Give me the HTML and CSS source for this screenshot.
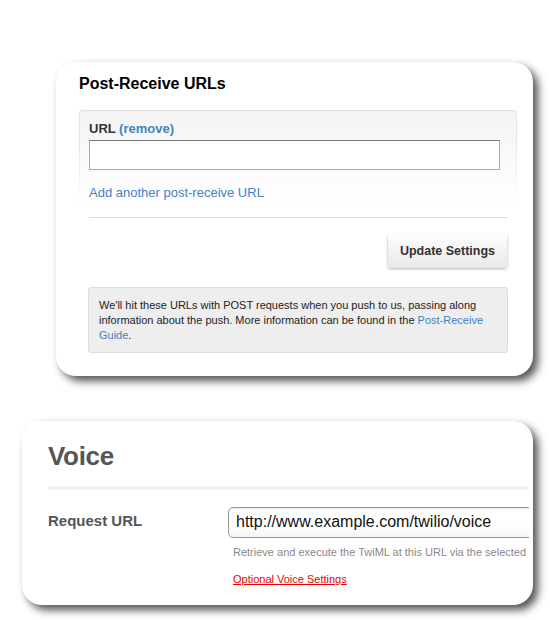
FILE: index.html
```html
<!DOCTYPE html>
<html>
<head>
<meta charset="utf-8">
<link rel="stylesheet" href="styles.css">
</head>
<body>
<div class="page">
  <div class="card card-gh">
    <h2 class="gh-title">Post-Receive URLs</h2>
    <div class="url-box">
      <div class="url-label">URL <a class="link">(remove)</a></div>
      <div class="url-input"></div>
      <a class="link add-link">Add another post-receive URL</a>
    </div>
    <div class="gh-rule"></div>
    <div class="btn-row"><div class="btn">Update Settings</div></div>
    <div class="info">We'll hit these URLs with POST requests when you push to us, passing along information about the push. More information can be found in the <a class="link">Post-Receive</a> <a class="link">Guide</a>.</div>
  </div>

  <div class="card card-tw">
    <div class="tw-clip">
      <h2 class="tw-title">Voice</h2>
      <div class="tw-rule"></div>
      <div class="tw-row">
        <div class="tw-label">Request URL</div>
        <div class="tw-field">
          <div class="tw-input">http://www.example.com/twilio/voice</div>
          <div class="tw-hint">Retrieve and execute the TwiML at this URL via the selected</div>
          <a class="tw-opt">Optional Voice Settings</a>
        </div>
      </div>
    </div>
  </div>
</div>
</body>
</html>
```

FILE: styles.css
```css
html, body {
  margin: 0;
  padding: 0;
  background: #fff;
}
body {
  font-family: "Liberation Sans", Arial, sans-serif;
  width: 550px;
  height: 620px;
  overflow: hidden;
}
.page {
  display: flex;
  flex-direction: column;
}
.card {
  background: #fff;
  border-radius: 20px;
  box-shadow: 5px 5px 8px rgba(0, 0, 0, 0.68);
  box-sizing: border-box;
}
.card-gh {
  margin: 62px 0 0 56px;
  width: 477px;
  height: 314px;
  padding: 13px 16px 0 23px;
}
.gh-title {
  margin: 0;
  font-size: 16px;
  font-weight: bold;
  color: #000;
  line-height: 18px;
}
.url-box {
  margin-top: 17px;
  border: 1px solid transparent;
  border-bottom: none;
  border-radius: 4px 4px 0 0;
  background: linear-gradient(#f4f4f4, #fff 95px) padding-box,
              linear-gradient(#e2e2e2, #e8e8e8 40%, #fff) border-box;
  padding: 10px 16px 14px 9px;
  height: 96px;
  box-sizing: border-box;
}
.url-label {
  font-size: 13px;
  font-weight: bold;
  color: #333;
  line-height: 16px;
}
.link {
  color: #4183c4;
  text-decoration: none;
}
.url-input {
  margin-top: 3px;
  height: 28px;
  background: #fff;
  border: 1px solid #aaa;
  border-top-color: #777;
}
.add-link {
  display: block;
  margin-top: 15px;
  font-size: 13px;
  line-height: 16px;
}
.gh-rule {
  margin: 11px 9px 0 10px;
  border-top: 1px solid #ddd;
}
.btn-row {
  display: flex;
  justify-content: flex-end;
  margin: 16px 10px 0 0;
}
.btn {
  width: 119px;
  height: 34px;
  box-sizing: border-box;
  border-radius: 3px;
  background: linear-gradient(#fdfdfd, #e8e8e8);
  box-shadow: 0 1px 3px rgba(0, 0, 0, 0.3);
  font-size: 12.5px;
  font-weight: bold;
  color: #333;
  display: flex;
  align-items: center;
  justify-content: center;
}
.info {
  margin: 19px 9px 0 9px;
  background: #eee;
  border: 1px solid #ddd;
  border-radius: 3px;
  padding: 10px 10px 9px 10px;
  font-size: 11px;
  line-height: 15px;
  color: #222;
}

.card-tw {
  margin: 45px 0 0 22px;
  width: 511px;
  height: 184px;
  padding: 0 4px 0 26px;
}
.tw-clip {
  overflow: hidden;
  height: 100%;
}
.tw-title {
  margin: 0;
  padding-top: 22px;
  font-size: 26px;
  font-weight: bold;
  color: #555;
  line-height: 26px;
  letter-spacing: -0.3px;
}
.tw-rule {
  margin-top: 17px;
  height: 4px;
  background: #f2f2f2;
}
.tw-row {
  display: flex;
  margin-top: 17px;
}
.tw-label {
  width: 180px;
  flex: none;
  font-size: 15px;
  font-weight: bold;
  color: #555;
  padding-top: 5px;
}
.tw-field {
  flex: none;
  width: 400px;
}
.tw-input {
  height: 31px;
  box-sizing: border-box;
  border: 1px solid #999;
  border-radius: 5px;
  background: linear-gradient(#fff, #fff 60%, #f4f4f4);
  box-shadow: inset 0 1px 2px rgba(0, 0, 0, 0.1);
  font-size: 16px;
  color: #111;
  padding: 5px 0 0 7px;
  white-space: nowrap;
}
.tw-hint {
  margin: 7px 0 0 5px;
  font-size: 11px;
  color: #888;
  white-space: nowrap;
  line-height: 14px;
}
.tw-opt {
  display: inline-block;
  margin: 13px 0 0 5px;
  font-size: 11px;
  color: #e00;
  text-decoration: underline;
  line-height: 14px;
}
```
